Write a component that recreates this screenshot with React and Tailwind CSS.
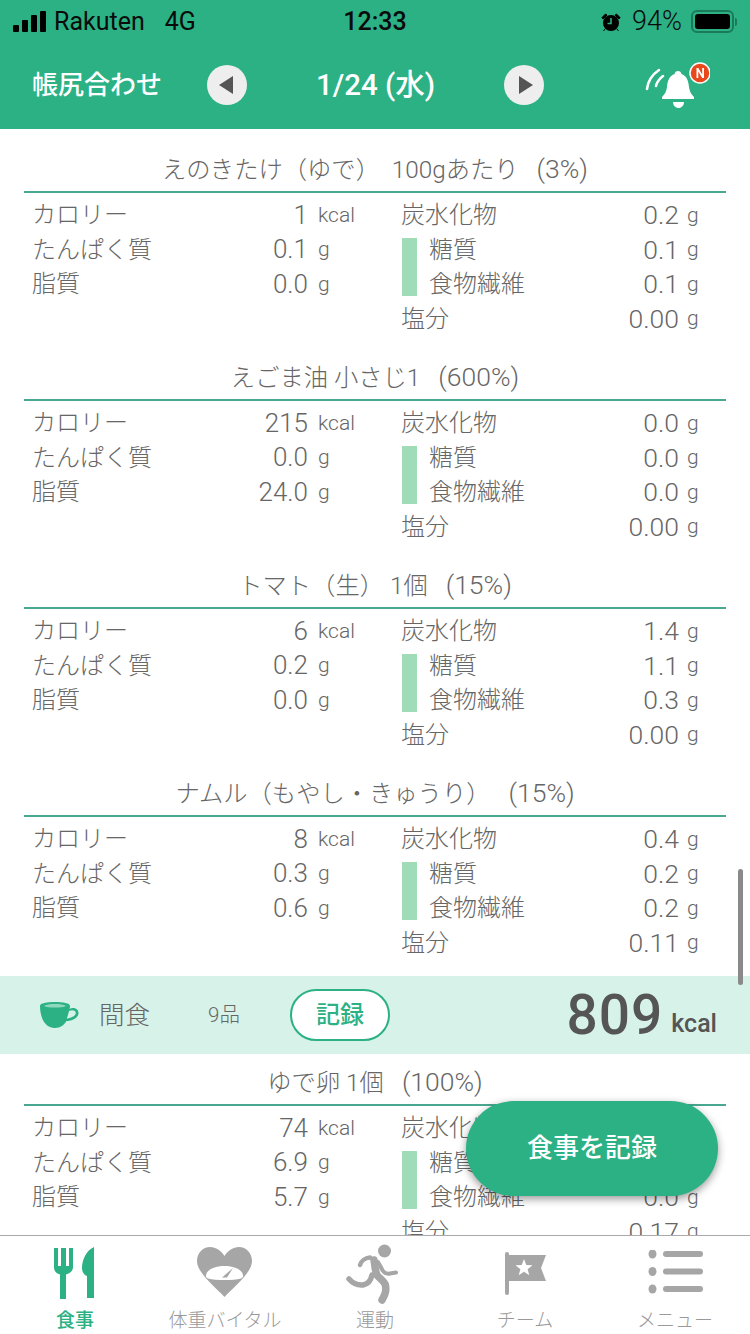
const foods = [
  { name: 'えのきたけ（ゆで）  100gあたり', pct: '(3%)', kcal: '1', protein: '0.1', fat: '0.0', carb: '0.2', sugar: '0.1', fiber: '0.1', salt: '0.00' },
  { name: 'えごま油 小さじ1', pct: '(600%)', kcal: '215', protein: '0.0', fat: '24.0', carb: '0.0', sugar: '0.0', fiber: '0.0', salt: '0.00' },
  { name: 'トマト（生） 1個', pct: '(15%)', kcal: '6', protein: '0.2', fat: '0.0', carb: '1.4', sugar: '1.1', fiber: '0.3', salt: '0.00' },
  { name: 'ナムル（もやし・きゅうり）', pct: '(15%)', kcal: '8', protein: '0.3', fat: '0.6', carb: '0.4', sugar: '0.2', fiber: '0.2', salt: '0.11' },
];

const snack = { name: 'ゆで卵 1個', pct: '(100%)', kcal: '74', protein: '6.9', fat: '5.7', carb: '0.5', sugar: '0.5', fiber: '0.0', salt: '0.17' };

function LeftRow({ label, value, unit = 'g' }) {
  return (
    <div className="flex h-[34.5px] items-center">
      <span>{label}</span>
      <span className="ml-auto text-[26px]">{value}</span>
      <span className="ml-[10px] w-[38px] text-[21px]">{unit}</span>
    </div>
  );
}

function RightRow({ label, value }) {
  return (
    <div className="flex h-[34.5px] items-center">
      <span className="-ml-px">{label}</span>
      <span className="ml-auto text-[26.500px]">{value}</span>
      <span className="ml-[8px] w-[12px] text-[21px]">g</span>
    </div>
  );
}

function FoodBlock({ food, tight }) {
  return (
    <section className={tight ? 'mx-[24px]' : 'mx-[24px] mb-[13px]'}>
      <h3 className="flex h-[50px] items-center justify-center pt-[5px] text-center text-[24.300px] font-light text-[#666]">
        <div className="whitespace-pre">
          {food.name}
          <span className="ml-[18px] text-[26.500px]">{food.pct}</span>
        </div>
      </h3>
      <div className="h-[2px] bg-[#48a892]" />
      <div className="flex pt-[5px] pl-[8px] text-[24px] font-light text-[#666]">
        <div className="w-[324px]">
          <LeftRow label="カロリー" value={food.kcal} unit="kcal" />
          <LeftRow label="たんぱく質" value={food.protein} />
          <LeftRow label="脂質" value={food.fat} />
        </div>
        <div className="ml-[46px] w-[297px]">
          <RightRow label="炭水化物" value={food.carb} />
          <div className="flex">
            <div className="h-[58px] w-[15px] shrink-0 self-center bg-[#a0dcb8]" />
            <div className="ml-[13px] flex-1">
              <RightRow label="糖質" value={food.sugar} />
              <RightRow label="食物繊維" value={food.fiber} />
            </div>
          </div>
          <RightRow label="塩分" value={food.salt} />
        </div>
      </div>
    </section>
  );
}

function AlarmIcon() {
  return (
    <svg width="20" height="20" viewBox="0 0 20 20">
      <circle cx="10" cy="11" r="8" fill="#000" />
      <path d="M1 5.500 4.500 2 6 3 2 7ZM19 5.500 15.500 2 14 3l4 4ZM4 17l-1.500 2M16 17l1.500 2" fill="#000" stroke="#000" />
      <path d="M10 6v5.500H6.500" fill="none" stroke="#2bb184" strokeWidth="1.600" />
    </svg>
  );
}

function BellIcon() {
  return (
    <svg width="68" height="64" viewBox="642 50 68 64">
      <path d="M647 86c1-8 6-15 12-19M656 83c1-4 3-7 7-10" fill="none" stroke="#fff" strokeWidth="2.600" strokeLinecap="round" />
      <path d="M678 68c2 0 3 1 3.500 3 6 2 7 8 7.500 13 .5 4 2 7 5 10v2h-32v-2c3-3 4.500-6 5-10 .5-5 1.500-11 7.500-13 .5-2 1.500-3 3.500-3Z" fill="#fff" />
      <path d="M673 99h11c0 3.500-2.500 6-5.500 6s-5.500-2.500-5.500-6Z" fill="#fff" />
      <circle cx="700" cy="70" r="10" fill="#e8481c" stroke="#fff" strokeWidth="1.500" />
      <path d="M696.500 75v-10h1.800l3.900 6.500V65h1.800v10h-1.800l-3.900-6.500V75Z" fill="#fff" />
    </svg>
  );
}

function CupIcon() {
  return (
    <svg width="40" height="27" viewBox="10 13 40 27">
      <path d="M10 17c0-3 7-4 15-4s15 1 15 4c0 1 0 2-.500 3 3-2 9-1 9 4 0 4-5 8-12 8-2.500 4-6 7-11.500 7C14 39 10 27 10 17Zm29 5c-.5 2-1.200 5-2.200 7.500 5-.5 9-3 9-5.500 0-3-4-3.500-6.800-2Z" fill="#2bb184" />
      <path d="M14 17c2-1.500 6-2 11-2s9 .5 11 2c-2 1-6 1.500-11 1.500S16 18 14 17Z" fill="#8fd8bd" />
    </svg>
  );
}

function ForkKnifeIcon() {
  return (
    <svg width="44" height="54" viewBox="53 1246 44 54" fill="#2bb184">
      <path d="M54 1248h4v18h3v-18h5v18h3v-18h4v19c0 4-3 6.500-7 7.500v24.500h-6v-24.500c-4-1-6-3.500-6-7.500Z" />
      <path d="M94 1247v51h-7v-22c-3-1-5-4-5-8 0-9 5-18 12-21Z" />
    </svg>
  );
}

function HeartScaleIcon() {
  return (
    <svg width="58" height="56" viewBox="196 1245 58 56">
      <path d="M224.500 1297c-9-10-27.500-24-27.500-36 0-8 6-14 13-14 6 0 11 3.500 14.500 9 3.500-5.500 8.500-9 14.500-9 7 0 13 6 13 14 0 12-18.500 26-27.500 36Z" fill="#a6a6a6" />
      <path d="M206 1275c1-5 8-9 18.500-9s17.500 4 18.500 9c.3 2-.5 3-2 3.500-4 1-10 1.500-16.500 1.500s-12.500-.5-16.500-1.500c-1.500-.5-2.300-1.500-2-3.500Z" fill="#fff" />
      <path d="m233 1268-6 9.500h-5Z" fill="#a6a6a6" />
    </svg>
  );
}

function RunnerIcon() {
  return (
    <svg width="64" height="58" viewBox="343 1244 64 58" fill="none" stroke="#a6a6a6" strokeLinecap="round" strokeLinejoin="round" className="overflow-visible">
      <circle cx="384.500" cy="1251" r="6.500" fill="#a6a6a6" stroke="none" />
      <path d="M360 1265c1-4 5-7 10-7.500" strokeWidth="4.500" />
      <path d="M378 1262c2 3 3 6 5 9s4 3 7 2.500l6-1" strokeWidth="4" />
      <path d="M374 1260c1 5 1 11 3 15 2 3 6 5 8 9 2 5 0 11-3 16" strokeWidth="7.500" />
      <path d="M372 1275c-1 5-4 9-9 10-5 .5-10-1.500-14-6" strokeWidth="5.500" />
    </svg>
  );
}

function FlagIcon() {
  return (
    <svg width="44" height="46" viewBox="503 1250 44 46">
      <path d="M505 1254a2 2 0 0 1 4 0v39a2 2 0 0 1-4 0Z" fill="#a6a6a6" />
      <path d="M509 1255h37l-5 13 5 13h-37Z" fill="#a6a6a6" />
      <path d="m524 1259 2.300 6 6.200.3-4.900 3.900 1.700 6-5.300-3.500-5.300 3.500 1.700-6-4.900-3.900 6.200-.3Z" fill="#fff" />
    </svg>
  );
}

function MenuIcon() {
  return (
    <svg width="58" height="46" viewBox="646 1250 58 46" fill="#a6a6a6">
      <ellipse cx="652.500" cy="1254" rx="4" ry="4.500" />
      <ellipse cx="652.500" cy="1271.500" rx="4" ry="4.500" />
      <ellipse cx="652.500" cy="1289" rx="4" ry="4.500" />
      <rect x="663" y="1251" width="40" height="6" rx="3" />
      <rect x="663" y="1268.500" width="40" height="6" rx="3" />
      <rect x="663" y="1286" width="40" height="6" rx="3" />
    </svg>
  );
}

function NavItem({ icon, label, active }) {
  return (
    <div className="flex w-[150px] flex-col items-center">
      <div className="flex h-[72px] items-center justify-center pt-[2px]">{icon}</div>
      <span className={`text-[19px] leading-[26px] ${active ? 'font-medium text-[#2bb184]' : 'font-light text-[#999]'}`}>{label}</span>
    </div>
  );
}

export default function App() {
  return (
    <div className="relative flex h-[1334px] w-[750px] flex-col overflow-hidden bg-white font-['Roboto','Noto_Sans_CJK_JP',sans-serif]">
      <header className="h-[129px] shrink-0 bg-[#2bb184]">
        <div className="grid h-[43px] grid-cols-[1fr_auto_1fr] items-center pr-[13px] pl-[13px] text-[25px] text-[#0b0b0b]">
          <div className="flex items-center">
            <div className="flex items-end gap-[3px] pb-[1px]">
              <div className="h-[7px] w-[6px] rounded-[1px] bg-black" />
              <div className="h-[12px] w-[6px] rounded-[1px] bg-black" />
              <div className="h-[17px] w-[6px] rounded-[1px] bg-black" />
              <div className="h-[21px] w-[6px] rounded-[1px] bg-black" />
            </div>
            <span className="ml-[8px]">Rakuten</span>
            <span className="ml-[20px]">4G</span>
          </div>
          <div className="font-medium">12:33</div>
          <div className="flex items-center justify-end">
            <AlarmIcon />
            <span className="ml-[11px] text-[27px] font-light">94%</span>
            <div className="ml-[9px] flex h-[23px] w-[43px] items-center rounded-[6px] border-2 border-[#1c7a5c] px-[2px]">
              <div className="h-[15px] w-full rounded-[3px] bg-black" />
            </div>
            <div className="ml-[1px] h-[8px] w-[2px] rounded-r-full bg-[#1c7a5c]" />
          </div>
        </div>
        <div className="flex h-[86px] items-center pb-[2px] pl-[32px] text-white">
          <h1 className="w-[175px] text-[26px] font-medium">帳尻合わせ</h1>
          <button type="button" className="flex h-[40px] w-[40px] items-center justify-center rounded-full bg-[#eeeeee]">
            <span className="mr-[3px] h-0 w-0 border-y-[9px] border-r-[14px] border-y-transparent border-r-[#555]" />
          </button>
          <div className="w-[257px] text-center text-[29.500px] font-medium">1/24 (水)</div>
          <button type="button" className="flex h-[40px] w-[40px] items-center justify-center rounded-full bg-[#eeeeee]">
            <span className="ml-[3px] h-0 w-0 border-y-[9px] border-l-[14px] border-y-transparent border-l-[#555]" />
          </button>
          <div className="ml-[98px]"><BellIcon /></div>
        </div>
      </header>

      <main className="min-h-0 flex-1 overflow-hidden pt-[12px]">
        {foods.map((food) => (
          <FoodBlock key={food.name} food={food} />
        ))}
        <div className="mt-[16px] flex h-[78px] items-center bg-[#d7f2e8] pr-[33px] pl-[40px] text-[#666]">
          <CupIcon />
          <span className="ml-[19px] text-[25.500px] font-light">間食</span>
          <span className="ml-[58px] text-[20.500px] font-light">9品</span>
          <button type="button" className="ml-[50px] flex h-[52px] w-[100px] items-center justify-center rounded-full border-2 border-[#2bb184] bg-white text-[24px] font-medium text-[#2bb184]">記録</button>
          <span className="ml-auto text-[55px] leading-none font-medium tracking-[1px] text-[#555]">809</span>
          <span className="mt-[18px] ml-[8px] text-[25px] font-medium text-[#555]">kcal</span>
        </div>
        <FoodBlock food={snack} tight />
      </main>

      <nav className="flex h-[99px] shrink-0 border-t border-[#aaa] bg-white">
        <NavItem icon={<ForkKnifeIcon />} label="食事" active />
        <NavItem icon={<HeartScaleIcon />} label="体重バイタル" />
        <NavItem icon={<RunnerIcon />} label="運動" />
        <NavItem icon={<FlagIcon />} label="チーム" />
        <NavItem icon={<MenuIcon />} label="メニュー" />
      </nav>

      <button type="button" className="absolute top-[1101px] left-[466px] h-[95px] w-[252px] rounded-full bg-[#2bb184] text-[26px] font-medium text-white shadow-[0_3px_8px_rgba(0,0,0,0.4)]">食事を記録</button>
      <div className="absolute top-[869px] left-[738px] h-[116px] w-[5px] rounded-full bg-[#8a8a8a]" />
    </div>
  );
}
